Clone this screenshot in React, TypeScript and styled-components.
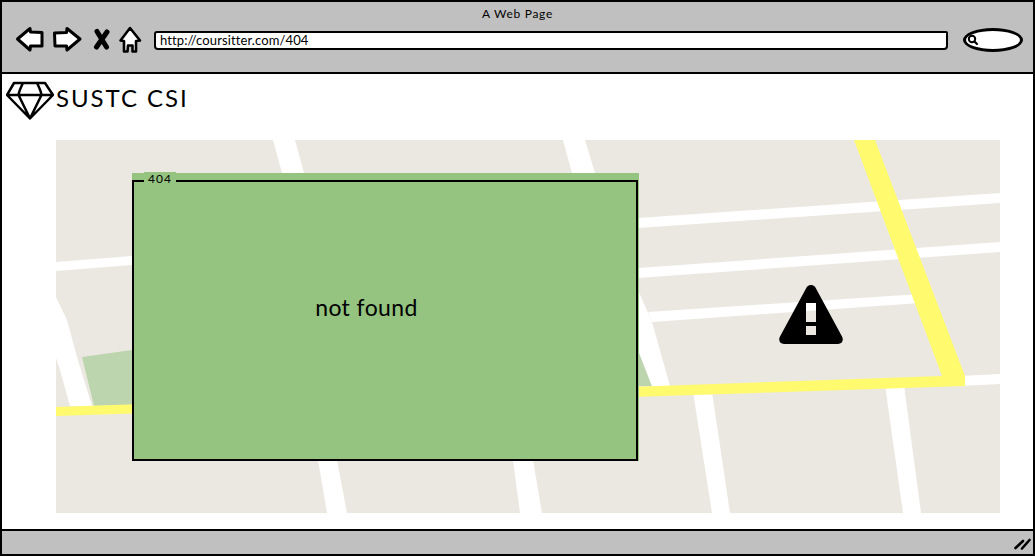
import React from "react";
import styled, { createGlobalStyle } from "styled-components";

const Global = createGlobalStyle`
  html, body { margin: 0; padding: 0; background: #fff; }
  body { font-family: "Lato", "Liberation Sans", sans-serif; color: #000; overflow: hidden; }
  * { box-sizing: border-box; }
`;

const Window = styled.div`
  width: 1035px;
  height: 556px;
  border: 2px solid #000;
  display: flex;
  flex-direction: column;
  background: #fff;
`;

const Toolbar = styled.header`
  height: 72px;
  flex: none;
  background: #c0c0c0;
  border-bottom: 2px solid #000;
  display: flex;
  flex-direction: column;
`;

const WindowTitle = styled.div`
  height: 21px;
  padding-top: 4px;
  text-align: center;
  font-size: 12px;
  line-height: 15px;
  letter-spacing: 0.7px;
`;

const NavRow = styled.div`
  display: flex;
  align-items: center;
  height: 32px;
  padding: 0 11px 0 14px;
`;

const NavIcon = styled.svg`
  display: block;
  flex: none;
  overflow: visible;
`;

const UrlField = styled.div`
  flex: none;
  width: 794px;
  height: 19px;
  margin: 2px 0 0 12px;
  background: #fff;
  border: 2px solid #000;
  border-radius: 3px 2px 4px 4px;
  padding-left: 4px;
  font-size: 13px;
  line-height: 15px;
  letter-spacing: 0.12px;
  white-space: nowrap;
`;

const SearchField = styled.div`
  flex: none;
  width: 60px;
  height: 24px;
  margin: 1px 0 0 15px;
  background: #fff;
  border: 3px solid #000;
  border-radius: 50%;
  display: flex;
  align-items: center;
  padding-left: 1px;
`;

const Content = styled.main`
  flex: 1;
  display: flex;
  flex-direction: column;
  min-height: 0;
`;

const Brand = styled.div`
  height: 66px;
  flex: none;
  display: flex;
  align-items: flex-start;
  padding: 7px 0 0 4px;
`;

const BrandName = styled.div`
  margin: 0 0 0 2px;
  font-size: 24px;
  line-height: 34px;
  letter-spacing: 1.95px;
  font-weight: 400;
`;

const MapArea = styled.section`
  position: relative;
  flex: none;
  width: 944px;
  height: 373px;
  margin-left: 54px;
`;

const MapArt = styled.svg`
  display: block;
  width: 944px;
  height: 373px;
`;

const WarningMark = styled.svg`
  position: absolute;
  left: 723px;
  top: 145px;
  width: 64px;
  height: 59px;
`;

const NoticePanel = styled.div`
  position: absolute;
  left: 76px;
  top: 33px;
  width: 507px;
  height: 288px;
  background: #94c47f;
  padding-top: 7px;
`;

const NoticeFrame = styled.div`
  position: relative;
  height: 281px;
  width: 506px;
  border: 2px solid #000;
  display: flex;
  align-items: center;
  justify-content: center;
  padding: 0 37px 28px 0;
`;

const NoticeLegend = styled.span`
  position: absolute;
  left: 10px;
  top: -10px;
  padding: 0 4px;
  background: #94c47f;
  font-size: 12px;
  line-height: 14px;
  letter-spacing: 1px;
`;

const NoticeText = styled.div`
  font-size: 23px;
  line-height: 30px;
  letter-spacing: 0.4px;
`;

const StatusBar = styled.footer`
  height: 25px;
  flex: none;
  background: #c0c0c0;
  border-top: 2px solid #000;
  display: flex;
  justify-content: flex-end;
  align-items: center;
  padding-right: 2px;
`;

const roads = [
  "273,140 295,140 304,173 282,173",
  "563,140 585,140 595,173 572,173",
  "318,460 337,460 347,513 327,513",
  "513,460 533,460 542,513 520,513",
  "56,262 132,256 132,265 56,271",
  "56,297 67,320 77,357 92,406 70,406 60,370 56,358",
  "638,218 1000,193 1000,203 638,228",
  "638,268 1000,242 1000,252 638,278",
  "648,312 920,294 920,303 652,322",
  "638,290 652,322 670,386 652,386 638,350",
  "693,392 712,392 730,513 712,513",
  "885,385 904,385 921,513 903,513",
  "960,376 1000,374 1000,384 960,386",
];

const App: React.FC = () => (
  <>
    <Global />
    <Window>
      <Toolbar>
        <WindowTitle>A Web Page</WindowTitle>
        <NavRow>
          <NavIcon width="27" height="26" viewBox="16 24 27 26">
            <path d="M17.500 37L30 26.500L30.500 30L42 30.500L42 44L30.500 44L30 48Z" fill="#fff" stroke="#000" strokeWidth="3" strokeLinejoin="round" />
          </NavIcon>
          <NavIcon width="29" height="26" viewBox="53 24 29 26" style={{ marginLeft: 10 }}>
            <path d="M80 37L67 26.500L66.500 30.500L54.500 31L55 44L66.500 44L67 48Z" fill="#fff" stroke="#000" strokeWidth="3" strokeLinejoin="round" />
          </NavIcon>
          <NavIcon width="16" height="21" viewBox="94 26 16 21" style={{ marginLeft: 12 }}>
            <path d="M97 28.500L106.500 44M107 29L96.500 44" fill="none" stroke="#000" strokeWidth="5" strokeLinecap="round" />
          </NavIcon>
          <NavIcon width="23" height="27" viewBox="119 23 23 27" style={{ marginLeft: 9 }}>
            <path d="M130 25L140 37.500L136 38L136 48.500L132.500 48.500L132.500 42.500L128 42.500L127.500 48.500L124 48.500L124 38L120.500 37.500Z" fill="#fff" stroke="#000" strokeWidth="2.6" strokeLinejoin="round" />
          </NavIcon>
          <UrlField>http://coursitter.com/404</UrlField>
          <SearchField>
            <svg width="12" height="12" viewBox="0 0 12 12">
              <circle cx="5" cy="5" r="3.200" fill="none" stroke="#000" strokeWidth="2" />
              <path d="M7.500 7.500L10 10" stroke="#000" strokeWidth="2.200" strokeLinecap="round" />
            </svg>
          </SearchField>
        </NavRow>
      </Toolbar>
      <Content>
        <Brand>
          <svg width="48" height="40" viewBox="6 82 48 40">
            <path
              d="M14 84H45L53 96L30 119.500L7 96ZM7 96H53M23 84C21 88 19 92 18.500 96L30 119.500L41.500 96C41 92 39 88 37 84"
              fill="none"
              stroke="#000"
              strokeWidth="2.500"
              strokeLinejoin="round"
            />
          </svg>
          <BrandName>SUSTC CSI</BrandName>
        </Brand>
        <MapArea>
          <MapArt viewBox="56 140 944 373">
            <rect x="56" y="140" width="944" height="373" fill="#ebe8e1" />
            <polygon points="82,357 132,350 132,405 94,406" fill="#bdd5ae" />
            <polygon points="638,350 652,386 638,386" fill="#bdd5ae" />
            {roads.map((p) => (
              <polygon key={p} points={p} fill="#fff" />
            ))}
            <polygon points="854,140 875,140 965,376 965,386 56,416 56,407 942,376" fill="#fffa6e" />
          </MapArt>
          <WarningMark viewBox="779 285 64 59">
            <path
              fillRule="evenodd"
              d="M811 285C813.500 285 815 286.500 816 288.500L842 336.500C844 340.500 842 344 838 344L784 344C780 344 778 340.500 780 336.500L806 288.500C807 286.500 808.500 285 811 285ZM806 303V322H816V303ZM806 326V335H816V326Z"
              fill="#000"
            />
          </WarningMark>
          <NoticePanel>
            <NoticeFrame>
              <NoticeLegend>404</NoticeLegend>
              <NoticeText>not found</NoticeText>
            </NoticeFrame>
          </NoticePanel>
        </MapArea>
      </Content>
      <StatusBar>
        <svg width="17" height="14" viewBox="0 0 17 14">
          <path d="M1.500 12L9 5M8 12.500L15.500 4" stroke="#000" strokeWidth="2.600" strokeLinecap="round" fill="none" />
        </svg>
      </StatusBar>
    </Window>
  </>
);

export default App;
